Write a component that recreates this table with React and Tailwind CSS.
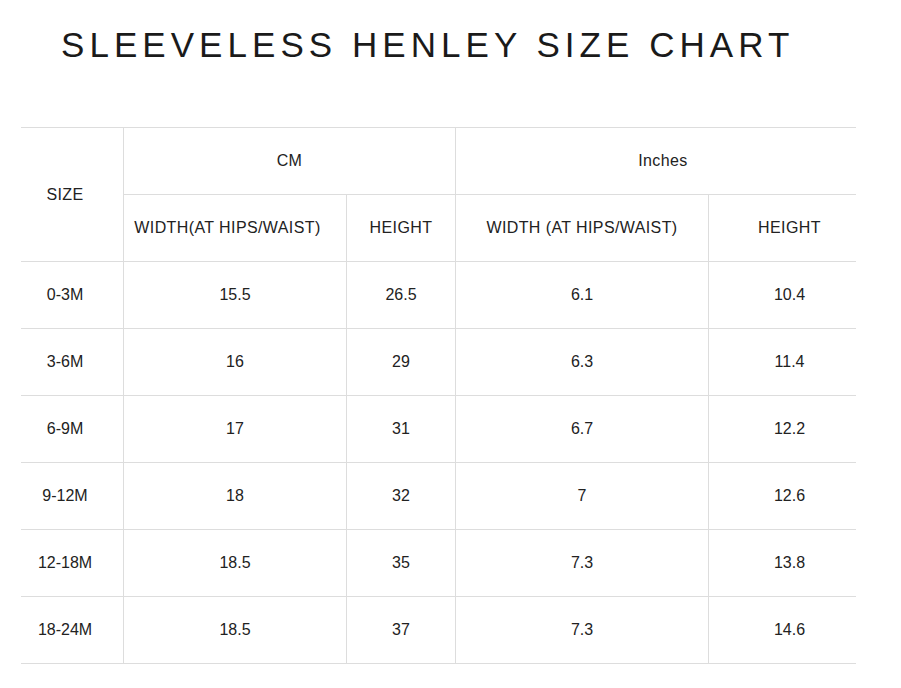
const ROWS = [
  ['0-3M', '15.5', '26.5', '6.1', '10.4'],
  ['3-6M', '16', '29', '6.3', '11.4'],
  ['6-9M', '17', '31', '6.7', '12.2'],
  ['9-12M', '18', '32', '7', '12.6'],
  ['12-18M', '18.5', '35', '7.3', '13.8'],
  ['18-24M', '18.5', '37', '7.3', '14.6'],
];

const cell = 'flex h-[67px] items-center justify-center border-b border-[#dddddd] text-center';
const head = `${cell} tracking-[0.4px]`;

export default function App() {
  return (
    <div className="min-h-[688px] bg-white text-[#222222]" style={{ fontFamily: '"Liberation Sans", Arial, sans-serif' }}>
      {/* Title */}
      <h1 className="pl-[61px] pt-[27px] text-[35px] font-normal uppercase leading-[35px] tracking-[5.05px] text-[#1a1a1a]">
        Sleeveless Henley Size Chart
      </h1>

      {/* Table */}
      <div className="ml-[21px] mt-[65px] grid w-[835px] grid-cols-[103px_223px_109px_253px_147px] border-t border-[#dddddd] text-[16px]">
        <div className={`${head} row-span-2 h-[134px] border-r pr-[14px]`}>SIZE</div>
        <div className={`${head} col-span-2 border-r`}>CM</div>
        <div className={`${head} col-span-2 pl-[14px]`}>Inches</div>
        <div className={`${head} border-r pr-[15px]`}>WIDTH(AT HIPS/WAIST)</div>
        <div className={`${head} border-r`}>HEIGHT</div>
        <div className={`${head} border-r`}>WIDTH (AT HIPS/WAIST)</div>
        <div className={`${head} pl-[14px]`}>HEIGHT</div>

        {ROWS.map((r) => (
          <div key={r[0]} className="contents">
            <div className={`${cell} border-r pr-[14px]`}>{r[0]}</div>
            <div className={`${cell} border-r`}>{r[1]}</div>
            <div className={`${cell} border-r`}>{r[2]}</div>
            <div className={`${cell} border-r`}>{r[3]}</div>
            <div className={`${cell} pl-[14px]`}>{r[4]}</div>
          </div>
        ))}
      </div>
    </div>
  );
}
